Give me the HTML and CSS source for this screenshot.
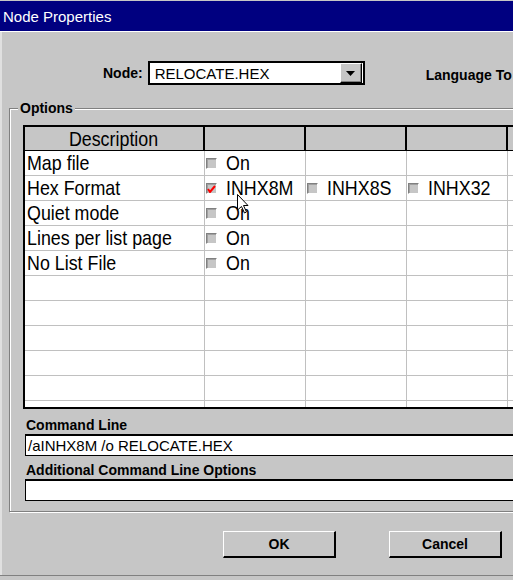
FILE: index.html
```html
<!DOCTYPE html>
<html>
<head>
<meta charset="utf-8">
<link rel="stylesheet" href="styles.css">
</head>
<body>
<div class="window">
  <div class="titlebar">Node Properties</div>
  <div class="client">
    <div class="node-row">
      <span class="lbl">Node:</span>
      <div class="combo">
        <span class="combo-text">RELOCATE.HEX</span>
        <span class="combo-btn"><svg width="9" height="5" viewBox="0 0 9 5"><polygon points="0,0 9,0 4.5,5" fill="#000"/></svg></span>
      </div>
      <span class="lbl lang">Language To</span>
    </div>
    <fieldset class="options">
      <legend>Options</legend>
      <div class="grid">
        <div class="row head">
          <div class="cell c1"><span class="t">Description</span></div><div class="cell"></div><div class="cell"></div><div class="cell"></div><div class="cell"></div>
        </div>
        <div class="row">
          <div class="cell c1"><span class="t">Map file</span></div>
          <div class="cell"><span class="cb"></span><span class="t opt">On</span></div>
          <div class="cell"></div><div class="cell"></div><div class="cell"></div>
        </div>
        <div class="row">
          <div class="cell c1"><span class="t">Hex Format</span></div>
          <div class="cell"><span class="cb"><svg width="9" height="9" viewBox="0 0 9 9"><polyline points="1,5 3,8 8,2" fill="none" stroke="#f00" stroke-width="2"/></svg></span><span class="t opt">INHX8M</span></div>
          <div class="cell"><span class="cb"></span><span class="t opt">INHX8S</span></div>
          <div class="cell"><span class="cb"></span><span class="t opt">INHX32</span></div>
          <div class="cell"></div>
        </div>
        <div class="row">
          <div class="cell c1"><span class="t">Quiet mode</span></div>
          <div class="cell"><span class="cb"></span><span class="t opt">On</span></div>
          <div class="cell"></div><div class="cell"></div><div class="cell"></div>
        </div>
        <div class="row">
          <div class="cell c1"><span class="t">Lines per list page</span></div>
          <div class="cell"><span class="cb"></span><span class="t opt">On</span></div>
          <div class="cell"></div><div class="cell"></div><div class="cell"></div>
        </div>
        <div class="row">
          <div class="cell c1"><span class="t">No List File</span></div>
          <div class="cell"><span class="cb"></span><span class="t opt">On</span></div>
          <div class="cell"></div><div class="cell"></div><div class="cell"></div>
        </div>
        <div class="row"><div class="cell c1"></div><div class="cell"></div><div class="cell"></div><div class="cell"></div><div class="cell"></div></div>
        <div class="row"><div class="cell c1"></div><div class="cell"></div><div class="cell"></div><div class="cell"></div><div class="cell"></div></div>
        <div class="row"><div class="cell c1"></div><div class="cell"></div><div class="cell"></div><div class="cell"></div><div class="cell"></div></div>
        <div class="row"><div class="cell c1"></div><div class="cell"></div><div class="cell"></div><div class="cell"></div><div class="cell"></div></div>
        <div class="row"><div class="cell c1"></div><div class="cell"></div><div class="cell"></div><div class="cell"></div><div class="cell"></div></div>
        <div class="row"><div class="cell c1"></div><div class="cell"></div><div class="cell"></div><div class="cell"></div><div class="cell"></div></div>
      </div>
      <div class="field-label first">Command Line</div>
      <div class="field">/aINHX8M /o RELOCATE.HEX</div>
      <div class="field-label">Additional Command Line Options</div>
      <div class="field"></div>
    </fieldset>
    <div class="buttons">
      <button class="btn">OK</button>
      <button class="btn">Cancel</button>
    </div>
  </div>
</div>
<svg class="cursor" width="12" height="20" viewBox="0 0 12 20">
  <polygon points="0.5,0.5 0.5,16 4.5,12.5 7.5,19 9.5,18 6.5,11.5 11,11.5" fill="#fff" stroke="#000" stroke-width="1"/>
</svg>
</body>
</html>
```

FILE: styles.css
```css
html, body {
  margin: 0;
  padding: 0;
}
body {
  width: 513px;
  height: 580px;
  overflow: hidden;
  background: #c6c6c6;
  position: relative;
  font-family: "Liberation Sans", Arial, sans-serif;
}
.window {
  width: 620px;
  padding-top: 1px;
  background: #c6c6c6;
}
.titlebar {
  height: 30px;
  line-height: 31px;
  background: #000080;
  color: #fff;
  font-size: 15px;
  padding-left: 3px;
}
.client {
  border-top: 1px solid #fff;
  border-bottom: 1px solid #808080;
  box-shadow: inset 1px 0 0 #e0e0e0, inset 2px 0 0 #e0e0e0;
  height: 545px;
  box-sizing: border-box;
  padding-top: 29px;
}
.node-row {
  display: flex;
  align-items: center;
  height: 24px;
  padding-left: 103px;
}
.lbl {
  font-weight: bold;
  font-size: 14px;
  color: #000;
}
.combo {
  margin-left: 5px;
  width: 217px;
  height: 24px;
  box-sizing: border-box;
  border: 2px solid #000;
  background: #fff;
  display: flex;
  align-items: center;
  justify-content: space-between;
}
.combo-text {
  font-size: 15px;
  padding-left: 5px;
}
.combo-btn {
  width: 22px;
  height: 20px;
  box-sizing: border-box;
  background: #c6c6c6;
  border-top: 1px solid #fff;
  border-left: 1px solid #fff;
  border-right: 1px solid #000;
  border-bottom: 1px solid #000;
  box-shadow: inset -1px -1px 0 #808080;
  display: flex;
  align-items: center;
  justify-content: center;
  margin-right: 1px;
}
.lang {
  margin-left: 61px;
  margin-top: 4px;
}
.options {
  margin: 15px 0 0 9px;
  width: 590px;
  border: 1px solid #808080;
  box-shadow: inset 1px 1px 0 #fff, 1px 1px 0 #fff;
  padding: 9px 0 10px 13px;
  box-sizing: border-box;
}
.options legend {
  font-weight: bold;
  font-size: 14px;
  line-height: 16px;
  padding: 0 2px;
  margin-left: -5px;
  background: #c6c6c6;
}
.grid {
  border: 2px solid #000;
  border-right: none;
  height: 284px;
  box-sizing: border-box;
  overflow: hidden;
  background: #fff;
  font-family: "Liberation Sans", Arial, sans-serif;
  font-size: 21px;
  color: #000;
}
.row {
  display: flex;
  height: 25px;
  box-sizing: border-box;
  border-bottom: 1px solid #c0c0c0;
}
.row.head {
  height: 24px;
  border-bottom: 1px solid #000;
  background: #c6c6c6;
}
.cell {
  width: 101px;
  flex: none;
  box-sizing: border-box;
  border-right: 1px solid #c0c0c0;
  display: flex;
  align-items: center;
  line-height: 24px;
  white-space: nowrap;
}
.cell.c1 {
  width: 180px;
  padding-left: 2px;
}
.head .cell {
  border-right: 2px solid #000;
}
.head .cell.c1 {
  justify-content: center;
  padding-left: 0;
}
.t {
  display: inline-block;
  transform: scaleX(0.85);
  transform-origin: left center;
}
.head .t {
  transform-origin: center center;
}
.cb {
  width: 11px;
  height: 11px;
  box-sizing: border-box;
  flex: none;
  background: #c6c6c6;
  border: 1px solid;
  border-color: #808080 #fff #fff #808080;
  box-shadow: inset 1px 1px 0 #a0a0a0;
  display: flex;
  align-items: center;
  justify-content: center;
  margin-left: 1px;
}
.opt {
  margin-left: 9px;
}
.field-label {
  font-weight: bold;
  font-size: 14px;
  line-height: 16px;
  margin: 6px 0 1px 3px;
}
.field-label.first {
  margin-top: 8px;
}
.field {
  height: 22px;
  box-sizing: border-box;
  border: 1px solid #000;
  border-top-width: 2px;
  margin-left: 2px;
  background: #fff;
  font-size: 15px;
  line-height: 19px;
  padding-left: 2px;
}
.buttons {
  display: flex;
  gap: 53px;
  padding-left: 223px;
  margin-top: 19px;
}
.btn {
  width: 113px;
  height: 27px;
  box-sizing: border-box;
  background: #c6c6c6;
  border-top: 1px solid #fff;
  border-left: 1px solid #fff;
  border-right: 2px solid #000;
  border-bottom: 2px solid #000;
  font-family: "Liberation Sans", Arial, sans-serif;
  font-weight: bold;
  font-size: 14px;
  color: #000;
  padding: 0;
}
.cursor {
  position: absolute;
  left: 237px;
  top: 194px;
}
```
